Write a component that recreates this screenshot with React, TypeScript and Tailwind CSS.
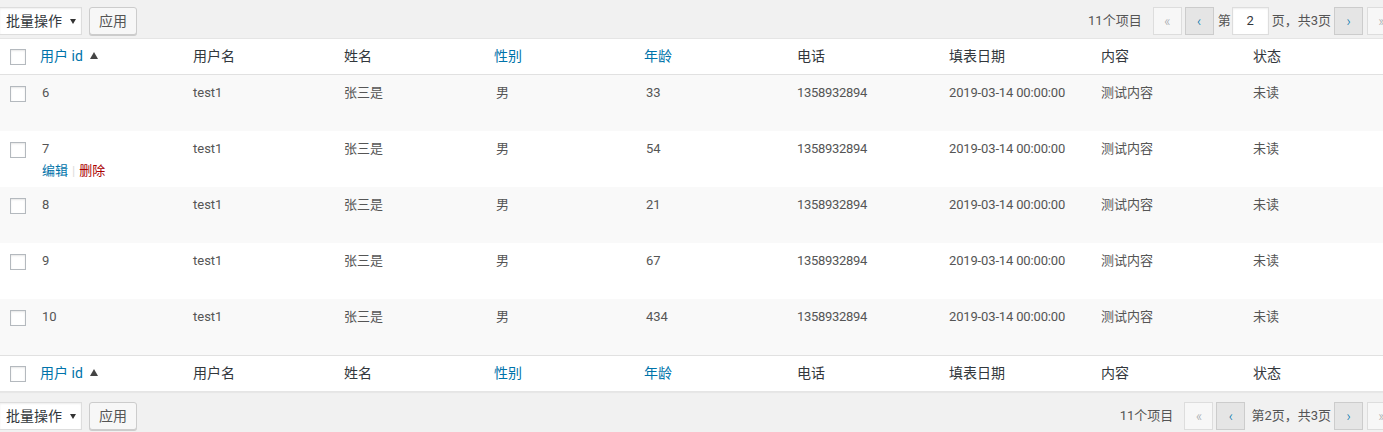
const rows = [
  { id: 6, login: "test1", name: "张三是", sex: "男", age: 33 },
  { id: 7, login: "test1", name: "张三是", sex: "男", age: 54, hover: true },
  { id: 8, login: "test1", name: "张三是", sex: "男", age: 21 },
  { id: 9, login: "test1", name: "张三是", sex: "男", age: 67 },
  { id: 10, login: "test1", name: "张三是", sex: "男", age: 434 },
];

const cols =
  "grid grid-cols-[32px_151px_151px_152px_150px_151px_152px_152px_152px_1fr]";

function Checkbox() {
  return (
    <span className="block w-4 h-4 border border-[#b4b9be] bg-white shadow-[inset_0_1px_2px_rgba(0,0,0,0.1)]" />
  );
}

function SortArrow() {
  return (
    <svg width="8" height="7" viewBox="0 0 8 7" className="ml-[7px] mb-[2px]">
      <path d="M4 0 L8 7 L0 7 Z" fill="#444" />
    </svg>
  );
}

function HeaderRow({ top }: { top?: boolean }) {
  return (
    <div
      className={`${cols} h-9 items-center text-[14px] text-[#32373c] ${
        top ? "border-b border-[#e1e1e1]" : "border-t border-[#e1e1e1]"
      }`}
    >
      <div className="pl-[10px]">
        <Checkbox />
      </div>
      <div className="pl-2 flex items-center text-[#0073aa]">
        用户 id
        <SortArrow />
      </div>
      <div className="pl-[10px]">用户名</div>
      <div className="pl-[10px]">姓名</div>
      <div className="pl-2 text-[#0073aa]">性别</div>
      <div className="pl-2 text-[#0073aa]">年龄</div>
      <div className="pl-[10px]">电话</div>
      <div className="pl-[10px]">填表日期</div>
      <div className="pl-[10px]">内容</div>
      <div className="pl-[10px]">状态</div>
    </div>
  );
}

function BulkActions() {
  return (
    <div className="flex items-center">
      <div className="relative -left-px flex items-center w-[83px] h-[28px] border border-[#ddd] bg-white shadow-[inset_0_1px_2px_rgba(0,0,0,0.07)] pl-[6px] text-[14px] text-[#32373c]">
        批量操作
        <svg width="6" height="5" viewBox="0 0 6 5" className="ml-[8px]">
          <path d="M0 0 L6 0 L3 5 Z" fill="#333" />
        </svg>
      </div>
      <button className="ml-[6px] w-[48px] h-[28px] rounded-[3px] border border-[#ccc] bg-[#f7f7f7] shadow-[0_1px_0_#ccc] text-[14px] text-[#555]">
        应用
      </button>
    </div>
  );
}

function NavButton({ label, active }: { label: string; active?: boolean }) {
  return (
    <span
      className={`flex items-center justify-center w-[29px] h-[28px] border text-[14px] font-light leading-none ${
        active
          ? "bg-[#e5e5e5] border-[#ccc] text-[#0073aa]"
          : "bg-[#f7f7f7] border-[#ddd] text-[#a0a5aa]"
      }`}
    >
      {label}
    </span>
  );
}

function Pagination({ top }: { top?: boolean }) {
  return (
    <div className="ml-auto flex items-center text-[13px] text-[#555]">
      <span className="mr-[11px]">11个项目</span>
      <NavButton label="«" />
      <span className="ml-[3px]">
        <NavButton label="‹" active />
      </span>
      {top ? (
        <span className="flex items-center ml-[4px]">
          第
          <span className="ml-[1px] flex items-center justify-center w-[37px] h-[28px] border border-[#ddd] bg-white shadow-[inset_0_1px_2px_rgba(0,0,0,0.07)] text-[#32373c]">
            2
          </span>
          <span className="ml-[3px]">页，共3页</span>
        </span>
      ) : (
        <span className="ml-[6px]">第2页，共3页</span>
      )}
      <span className="ml-[3px]">
        <NavButton label="›" active />
      </span>
      <span className="ml-[4px]">
        <NavButton label="»" />
      </span>
    </div>
  );
}

export default function App() {
  return (
    <div className="w-full h-[432px] overflow-hidden bg-[#f1f1f1] font-['Roboto','Noto_Sans_CJK_SC',sans-serif]">
      <div className="w-[1396px]">
        <div className="flex items-center h-[38px] pt-[7px] pb-[3px]">
          <BulkActions />
          <Pagination top />
        </div>

        <div className="bg-white border-y border-[#e5e5e5] shadow-[0_1px_1px_rgba(0,0,0,0.04)]">
          <HeaderRow top />
          {rows.map((r, i) => (
            <div
              key={r.id}
              className={`${cols} h-[56px] text-[13px] leading-[19.5px] text-[#555] ${
                i % 2 === 0 ? "bg-[#f9f9f9]" : "bg-white"
              }`}
            >
              <div className="pl-[10px] pt-[11px]">
                <Checkbox />
              </div>
              <div className="pl-[10px] pt-2">
                <div>{r.id}</div>
                {r.hover && (
                  <div className="pt-[2px]">
                    <span className="text-[#0073aa]">编辑</span>
                    <span className="text-[#ddd] px-[4px]">|</span>
                    <span className="text-[#a00]">删除</span>
                  </div>
                )}
              </div>
              <div className="pl-[10px] pt-2">{r.login}</div>
              <div className="pl-[10px] pt-2">{r.name}</div>
              <div className="pl-[10px] pt-2">{r.sex}</div>
              <div className="pl-[10px] pt-2">{r.age}</div>
              <div className="pl-[10px] pt-2 tracking-[-0.3px]">1358932894</div>
              <div className="pl-[10px] pt-2 tracking-[-0.15px]">2019-03-14 00:00:00</div>
              <div className="pl-[10px] pt-2">测试内容</div>
              <div className="pl-[10px] pt-2">未读</div>
            </div>
          ))}
          <HeaderRow />
        </div>

        <div className="flex items-center pt-[10px]">
          <BulkActions />
          <Pagination />
        </div>
      </div>
    </div>
  );
}
